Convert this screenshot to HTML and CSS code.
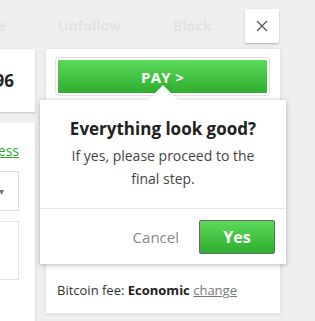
FILE: index.html
```html
<!DOCTYPE html>
<html lang="en">
<head>
  <meta charset="UTF-8">
  <meta name="viewport" content="width=device-width, initial-scale=1.0">
  <title>Checkout - Confirm</title>
  <link rel="stylesheet" href="styles.css">
</head>
<body>
  <div class="topbar">
    <div class="nav">
      <span class="nav-item nav-first">Message</span>
      <span class="nav-item">Unfollow</span>
      <span class="nav-item">Block</span>
    </div>
    <button class="close-button" aria-label="Close">
      <svg width="12" height="12" viewBox="0 0 12 12">
        <path d="M1 1 L11 11 M11 1 L1 11" stroke="#555" stroke-width="1.2" fill="none"/>
      </svg>
    </button>
  </div>

  <div class="main">
    <div class="left-column">
      <div class="side-card total-card">
        <span class="total-amount">0.0096</span>
      </div>
      <div class="side-card address-card">
        <a class="address-link" href="#">Change address</a>
        <div class="select-box">
          <span class="caret">▾</span>
        </div>
        <div class="notes-box"></div>
      </div>
    </div>

    <div class="pay-card">
      <div class="pay-wrap">
        <button class="pay-button">PAY &gt;</button>
      </div>
      <div class="pay-details"></div>
      <div class="fee-line">
        Bitcoin fee: <strong>Economic</strong> <a class="fee-change" href="#">change</a>
      </div>

      <div class="confirm-popover">
        <div class="popover-body">
          <div class="popover-title">Everything look good?</div>
          <div class="popover-text">If yes, please proceed to the final step.</div>
        </div>
        <div class="popover-actions">
          <button class="cancel-button">Cancel</button>
          <button class="yes-button">Yes</button>
        </div>
      </div>
    </div>
  </div>
</body>
</html>
```

FILE: styles.css
```css
body {
  margin: 0;
  padding: 0;
  width: 315px;
  height: 321px;
  overflow: hidden;
  font-family: 'Open Sans', 'Noto Sans', sans-serif;
  background: #efefef;
  color: #333;
}

.topbar {
  display: flex;
  align-items: flex-start;
  height: 49px;
  padding-right: 36px;
}

.nav {
  flex: 1;
  min-width: 0;
  display: flex;
  align-items: center;
  height: 50px;
  margin-left: -54px;
}

.nav-item {
  font-size: 14px;
  font-weight: 700;
  color: #e3e3e3;
  margin-right: 52px;
  white-space: nowrap;
}

.close-button {
  flex-shrink: 0;
  margin-top: 9px;
  width: 34px;
  height: 34px;
  background: white;
  border: none;
  border-radius: 2px;
  box-shadow: 0 1px 2px rgba(0, 0, 0, 0.25);
  display: flex;
  align-items: center;
  justify-content: center;
  padding: 0;
  cursor: pointer;
}

.main {
  display: flex;
  align-items: flex-start;
}

.left-column {
  width: 200px;
  margin-left: -165px;
  margin-right: 11px;
  display: flex;
  flex-direction: column;
  gap: 11px;
  flex-shrink: 0;
}

.side-card {
  background: white;
  box-shadow: 0 1px 2px rgba(0, 0, 0, 0.18);
}

.total-card {
  height: 63px;
  display: flex;
  align-items: center;
  justify-content: flex-end;
  padding-right: 21px;
  box-sizing: border-box;
}

.total-amount {
  font-size: 17px;
  font-weight: 700;
  color: #222;
}

.address-card {
  height: 220px;
  padding: 18px 16px 0 0;
  box-sizing: border-box;
  display: flex;
  flex-direction: column;
  align-items: flex-end;
}

.address-link {
  font-size: 14px;
  color: #2eaa2e;
  text-decoration: underline;
}

.select-box {
  margin-top: 11px;
  width: 120px;
  height: 40px;
  border: 1px solid #ddd;
  box-sizing: border-box;
  display: flex;
  align-items: center;
  justify-content: flex-end;
  padding-right: 14px;
}

.caret {
  font-size: 10px;
  color: #777;
}

.notes-box {
  margin-top: 10px;
  width: 120px;
  height: 59px;
  border: 1px solid #e3e3e3;
  box-sizing: border-box;
}

.pay-card {
  position: relative;
  width: 234px;
  background: white;
  box-shadow: 0 0 0 1px #e6e6e6, 0 1px 3px rgba(0, 0, 0, 0.15);
  padding: 9px 11px 0 10px;
  box-sizing: border-box;
  flex-shrink: 0;
}

.pay-wrap {
  padding: 2px;
  border-radius: 3px;
  box-shadow: 0 0 0 1px #e2e2e2;
}

.pay-button {
  display: block;
  width: 100%;
  height: 33px;
  border: none;
  border-radius: 1px;
  background: linear-gradient(to bottom, #5ad95a 0%, #2fad2f 100%);
  color: white;
  font-family: inherit;
  font-size: 15px;
  font-weight: 700;
  letter-spacing: 0.3px;
  cursor: pointer;
}

.pay-details {
  height: 176px;
}

.fee-line {
  font-size: 13px;
  color: #333;
  padding: 10px 1px 14px;
}

.fee-line strong {
  color: #222;
}

.fee-change {
  color: #777;
  text-decoration: underline;
}

.confirm-popover {
  position: absolute;
  top: 51px;
  left: -6px;
  width: 246px;
  height: 164px;
  background: white;
  box-shadow: 0 1px 5px rgba(0, 0, 0, 0.28);
  display: flex;
  flex-direction: column;
}

.confirm-popover::before {
  content: "";
  position: absolute;
  top: -15px;
  left: 108px;
  border-left: 15px solid transparent;
  border-right: 15px solid transparent;
  border-bottom: 15px solid white;
  filter: drop-shadow(0 -1px 1px rgba(0, 0, 0, 0.08));
}

.popover-body {
  flex: 1;
  text-align: center;
  padding: 17px 8px 0;
  border-bottom: 1px solid #e6e6e6;
}

.popover-title {
  font-size: 17px;
  font-weight: 700;
  color: #222;
  margin-bottom: 4px;
}

.popover-text {
  font-size: 14px;
  line-height: 23px;
  color: #444;
  padding: 0 20px;
}

.popover-actions {
  height: 55px;
  display: flex;
  align-items: center;
  justify-content: flex-end;
  padding-right: 11px;
  gap: 20px;
}

.cancel-button {
  background: none;
  border: none;
  font-family: inherit;
  font-size: 15px;
  color: #888;
  padding: 0;
  cursor: pointer;
}

.yes-button {
  width: 76px;
  height: 34px;
  background: linear-gradient(to bottom, #5ad95a 0%, #2fad2f 100%);
  border: 1px solid #6a6a6a;
  border-radius: 2px;
  color: white;
  font-family: inherit;
  font-size: 16px;
  font-weight: 700;
  cursor: pointer;
}
```
